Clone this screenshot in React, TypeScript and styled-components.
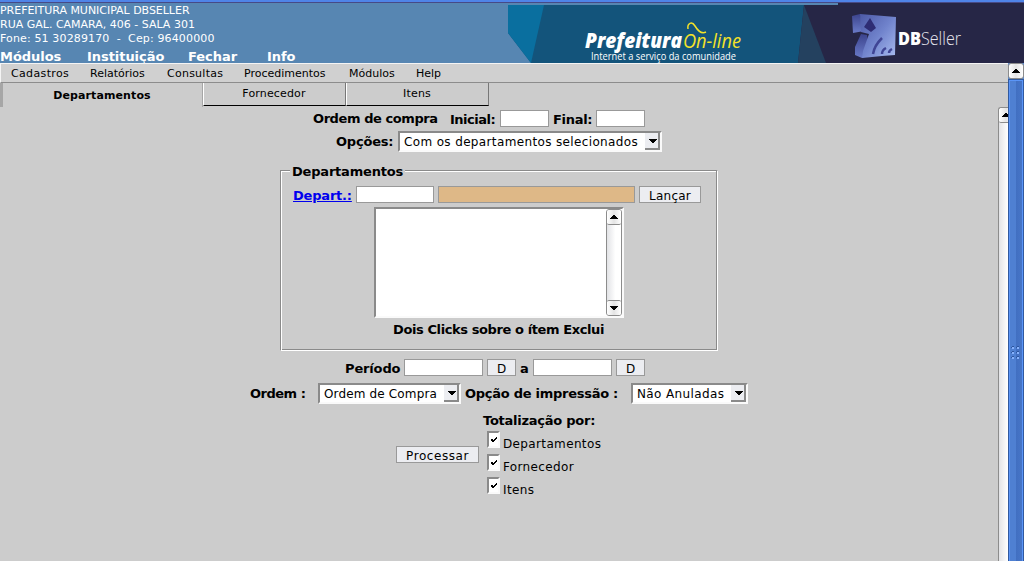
import React from "react";
import styled, { createGlobalStyle, css } from "styled-components";

const Global = createGlobalStyle`
  * { box-sizing: border-box; }
  html, body { margin: 0; padding: 0; overflow: hidden; }
  body { background: #ccc; color: #000; font: 12px "DejaVu Sans", sans-serif; }
`;

const Page = styled.div`
  width: 1024px;
  height: 561px;
  display: flex;
  flex-direction: column;
  overflow: hidden;
  background: #cccccc;
`;

const Header = styled.header`
  height: 63px;
  flex: none;
  display: flex;
  background: #5786b2;
  border-top: 2px solid #4f84e8;
  box-shadow: inset 0 1px 0 #474a86;
`;

const Account = styled.div`
  width: 508px;
  display: flex;
  flex-direction: column;
  padding-top: 2px;
  color: #fff;
`;

const Address = styled.div<{ $ls?: number }>`
  height: 14px;
  line-height: 14px;
  font-size: 11px;
  white-space: pre;
  letter-spacing: ${(p) => p.$ls ?? 0}px;
`;

const HeaderMenu = styled.nav`
  display: flex;
  margin-top: 3px;
  font-size: 13px;
  font-weight: bold;
  line-height: 16px;
  letter-spacing: -0.05px;
`;

const HeaderLink = styled.a<{ $w: number }>`
  width: ${(p) => p.$w}px;
  white-space: nowrap;
`;

const Banner = styled.svg`
  display: block;
  flex: none;
  margin-top: 1px;
`;

const Below = styled.div`
  flex: 1;
  display: flex;
  min-height: 0;
`;

const Main = styled.main`
  width: 1008px;
  display: flex;
  flex-direction: column;
`;

const MenuBar = styled.nav`
  height: 20px;
  flex: none;
  display: flex;
  padding-left: 10px;
  background: #d0d0d0;
  border-top: 1px solid #f4f4f4;
  border-left: 1px solid #f4f4f4;
  border-bottom: 1px solid #8c8c8c;
  font-size: 11px;
  line-height: 19px;
`;

const MenuItem = styled.span<{ $w: number; $ls?: number }>`
  width: ${(p) => p.$w}px;
  white-space: nowrap;
  letter-spacing: ${(p) => p.$ls ?? 0}px;
`;

const Body = styled.div`
  flex: 1;
  display: flex;
  min-height: 0;
`;

const Content = styled.div`
  width: 998px;
  display: flex;
  flex-direction: column;
`;

const Tabs = styled.div`
  display: flex;
  height: 24px;
  flex: none;
  font-size: 11px;
  text-align: center;
`;

const Tab = styled.div<{ $active?: boolean; $w: number }>`
  width: ${(p) => p.$w}px;
  line-height: 21px;
  ${(p) =>
    p.$active
      ? css`
          height: 24px;
          line-height: 25px;
          padding-right: 1px;
          letter-spacing: 0.1px;
          font-weight: bold;
          border-left: 3px solid #a6a6a6;
          border-right: 1px solid #a6a6a6;
        `
      : css`
          height: 23px;
          padding-right: 1px;
          letter-spacing: 0.15px;
          border-left: 1px solid #fff;
          border-right: 1px solid #777;
          border-bottom: 1px solid #000;
        `}
`;

const Row = styled.div<{ $left: number; $top: number; $h: number }>`
  display: flex;
  align-items: center;
  flex: none;
  height: ${(p) => p.$h}px;
  margin-top: ${(p) => p.$top}px;
  padding-left: ${(p) => p.$left}px;
`;

const Label = styled.label<{ $w: number; $ls?: number; $indent?: number; $drop?: number }>`
  width: ${(p) => p.$w}px;
  flex: none;
  padding-left: ${(p) => p.$indent ?? 0}px;
  padding-top: ${(p) => p.$drop ?? 0}px;
  font-size: 13px;
  font-weight: bold;
  line-height: 17px;
  white-space: nowrap;
  letter-spacing: ${(p) => p.$ls ?? 0}px;
`;

const DeptLink = styled(Label)`
  color: #0000ee;
  text-decoration: underline;
`;

const Field = styled.div<{ $w: number; $tan?: boolean }>`
  width: ${(p) => p.$w}px;
  height: 17px;
  flex: none;
  margin-right: 4px;
  border: 1px solid #999;
  background: ${(p) => (p.$tan ? "#deb887" : "#fff")};
`;

const Button = styled.button<{ $w: number; $ls?: number }>`
  width: ${(p) => p.$w}px;
  height: 17px;
  flex: none;
  margin: 0 4px 0 0;
  padding: 2px 0 0;
  border: 1px solid #999;
  background: #ecedf1;
  color: #000;
  font: 12px/15px "DejaVu Sans", sans-serif;
  white-space: nowrap;
  letter-spacing: ${(p) => p.$ls ?? 0}px;
`;

const sunken = css`
  border: 2px solid;
  border-color: #8a8a8a #fafafa #fafafa #8a8a8a;
  background: #fff;
`;

const SelectBox = styled.div<{ $w: number; $ls?: number }>`
  ${sunken}
  width: ${(p) => p.$w}px;
  height: 21px;
  flex: none;
  display: flex;
  justify-content: space-between;
  padding-left: 4px;
  font-size: 12px;
  line-height: 18px;
  white-space: nowrap;
  letter-spacing: ${(p) => p.$ls ?? 0}px;
`;

const DropButton = styled.span`
  width: 15px;
  height: 17px;
  display: flex;
  flex: none;
  background: #ecedf1;
  border: solid #8a8a8a;
  border-width: 0 2px 2px 0;
`;

const Group = styled.section`
  width: 438px;
  height: 186px;
  flex: none;
  margin: 13px 0 0 280px;
  display: flex;
  flex-direction: column;
`;

const GroupTitle = styled.div`
  display: flex;
  align-items: flex-start;
  height: 16px;
  flex: none;
`;

const Legend = styled(Label)`
  margin-top: -2px;
`;

const Groove = styled.div<{ $w: number; $side?: "left" | "right" }>`
  width: ${(p) => p.$w}px;
  height: 11px;
  margin-top: 5px;
  border-top: 1px solid #8a8a8a;
  box-shadow: inset 0 1px 0 #fff;
  ${(p) => p.$side === "left" && css`border-left: 1px solid #8a8a8a; box-shadow: inset 1px 1px 0 #fff;`}
  ${(p) => p.$side === "right" && css`border-right: 1px solid #fff; box-shadow: inset -1px 0 0 #8a8a8a, inset 0 1px 0 #fff;`}
`;

const GroupBody = styled.div`
  flex: 1;
  border: 1px solid;
  border-color: transparent #fff #fff #8a8a8a;
  border-top: 0;
  box-shadow: inset 1px 0 0 #fff, inset -1px -1px 0 #8a8a8a;
`;

const ListBox = styled.div`
  ${sunken}
  width: 250px;
  height: 111px;
  margin: 4px 0 0 93px;
  display: flex;
  justify-content: flex-end;
`;

const ListBar = styled.div`
  width: 16px;
  height: 107px;
  display: flex;
  flex-direction: column;
  justify-content: space-between;
  border: 1px solid #8c8c8c;
  border-radius: 3px;
  background: linear-gradient(90deg, #e2e3e6, #fff 60%);
`;

const Arrow = styled.div<{ $down?: boolean }>`
  height: 15px;
  display: flex;
  align-items: center;
  justify-content: center;
  border-radius: 2px;
  background: linear-gradient(90deg, #fff, #e4e4e4 50%, #fff);
  ${(p) => (p.$down ? "border-top" : "border-bottom")}: 1px solid #8c8c8c;
`;

const InnerBar = styled.div`
  width: 10px;
  margin-top: 24px;
  overflow: hidden;
  border-left: 1px solid #8c8c8c;
  border-top: 1px solid #8c8c8c;
  border-top-left-radius: 3px;
  background: linear-gradient(90deg, #e2e3e6, #fff);
`;

const InnerArrow = styled(Arrow)`
  width: 14px;
`;

const OuterBar = styled.div`
  width: 16px;
  display: flex;
  flex-direction: column;
  background: #5f89c8;
`;

const OuterArrow = styled(Arrow)`
  height: 16px;
  border: 1px solid #8c8c8c;
  border-radius: 3px;
`;

const Thumb = styled.div`
  flex: 1;
  border: 1px solid #30599f;
  border-bottom: 0;
  box-shadow: inset 1px 1px 0 #5a95f8, inset -1px 0 0 #5a95f8;
  background: linear-gradient(90deg, #4f80d2 50%, #416fc1 50%, #4876c8);
  display: flex;
  justify-content: center;
  padding-top: 266px;
`;

const Bottom = styled.div`
  display: flex;
  padding-left: 396px;
  margin-top: 8px;
`;

const Process = styled.div`
  width: 87px;
  padding-top: 34px;
`;

const Checks = styled.div`
  display: flex;
  flex-direction: column;
`;

const ChecksTitle = styled(Label)`
  height: 19px;
`;

const CheckRow = styled.label`
  display: flex;
  height: 23px;
  padding-left: 4px;
  font-size: 12px;
  line-height: 26px;
  letter-spacing: 0.36px;
`;

const CheckBox = styled.span`
  ${sunken}
  width: 13px;
  height: 17px;
  margin-right: 3px;
  display: flex;
`;

const Hint = styled(Label)`
  display: block;
  margin: 3px 0 0 112px;
`;

const Up = () => (
  <svg width="8" height="4" shapeRendering="crispEdges">
    <path d="M3 0h2v1h1v1h1v1h1v1H0V3h1V2h1V1h1z" />
  </svg>
);
const Down = () => (
  <svg width="8" height="4" shapeRendering="crispEdges">
    <path d="M0 0h8v1H7v1H6v1H5v1H3V3H2V2H1V1H0z" />
  </svg>
);
const Select = ({ w, ls, children }: { w: number; ls?: number; children: string }) => (
  <SelectBox $w={w} $ls={ls}>
    {children}
    <DropButton>
      <svg width="13" height="15" shapeRendering="crispEdges">
        <path d="M4 6h8v1h-1v1h-1v1H9v1H7V9H6V8H5V7H4z" />
      </svg>
    </DropButton>
  </SelectBox>
);
const Check = ({ children }: { children: string }) => (
  <CheckRow>
    <CheckBox>
      <svg width="9" height="13" shapeRendering="crispEdges">
        <path d="M7 4h1v2H7v1H6v1H5v1H3V8H2V6h2v1h1V6h1V5h1z" />
      </svg>
    </CheckBox>
    {children}
  </CheckRow>
);

const BannerArt = () => (
  <Banner width="516" height="60" viewBox="508 3 516 60">
    <defs>
      <linearGradient id="cube" x1="0" y1="0" x2="1" y2="1">
        <stop offset="0" stopColor="#4c59a6" />
        <stop offset=".5" stopColor="#7083cc" />
        <stop offset="1" stopColor="#a9bcf0" />
      </linearGradient>
      <linearGradient id="side" x1="0" y1="0" x2="0" y2="1">
        <stop offset="0" stopColor="#3b438c" />
        <stop offset="1" stopColor="#6a7bc8" />
      </linearGradient>
    </defs>
    <path fill="#13547b" d="M508 5h300v58H508z" />
    <path fill="#5786b2" d="M508 33l23 30h-23z" />
    <path fill="#0a6f9f" d="M508 5h36l-13 58-23-30z" />
    <path fill="#262646" d="M804 5h34V3h186v60H798z" />
    <path fill="#24415f" d="M804 5l22 58h-28z" />
    <text x="585" y="48" fill="#fff" fontFamily="Open Sans, sans-serif" fontSize="20.5" fontWeight="800" fontStyle="italic" textLength="97" lengthAdjust="spacingAndGlyphs">Prefeitura</text>
    <text x="683" y="48" fill="#f3e229" fontFamily="Open Sans, sans-serif" fontSize="20.5" fontStyle="italic" textLength="58" lengthAdjust="spacingAndGlyphs">On-line</text>
    <path d="M688 29c-1-6 4-8 7-3s7 8 11 6" fill="none" stroke="#f3e229" strokeWidth="1.5" />
    <text x="591" y="60" fill="#fff" fontFamily="Open Sans, sans-serif" fontSize="10" textLength="145" lengthAdjust="spacingAndGlyphs">Internet a serviço da comunidade</text>
    <path fill="url(#side)" d="M852 16l8-2 4 17-11 2z" />
    <path fill="url(#side)" d="M861 34l-6 13v8l7 3 8-3-3-20z" />
    <path fill="url(#cube)" d="M860 14l36 3-1 38-13 1-20 2 1-7 6-17-8-2z" />
    <path fill="#2e2d74" d="M870 18l6 10-5 4-7-5z" />
    <path fill="none" stroke="#3f4595" strokeWidth="2.5" d="M873 54c1-7 5-12 9-16M882 54c0-3 2-5 4-6M889 53c0-2 1-3 3-4" />
    <text x="898" y="45" fill="#fff" fontFamily="Open Sans, sans-serif" fontSize="18" fontWeight="800" textLength="23" lengthAdjust="spacingAndGlyphs">DB</text>
    <text x="921" y="45" fill="#e6e6ef" fontFamily="Open Sans, sans-serif" fontSize="18" fontWeight="300" textLength="40" lengthAdjust="spacingAndGlyphs">Seller</text>
  </Banner>
);

export default function App() {
  return (
    <Page>
      <Global />
      <Header>
        <Account>
          <Address $ls={-0.03}>PREFEITURA MUNICIPAL DBSELLER</Address>
          <Address>RUA GAL. CAMARA, 406 - SALA 301</Address>
          <Address $ls={0.14}>{"Fone: 51 30289170  -  Cep: 96400000"}</Address>
          <HeaderMenu>
            <HeaderLink $w={87}>Módulos</HeaderLink>
            <HeaderLink $w={101}>Instituição</HeaderLink>
            <HeaderLink $w={79}>Fechar</HeaderLink>
            <HeaderLink $w={60}>Info</HeaderLink>
          </HeaderMenu>
        </Account>
        <BannerArt />
      </Header>
      <Below>
        <Main>
          <MenuBar>
            <MenuItem $w={79} $ls={0.35}>Cadastros</MenuItem>
            <MenuItem $w={77}>Relatórios</MenuItem>
            <MenuItem $w={77} $ls={0.25}>Consultas</MenuItem>
            <MenuItem $w={105}>Procedimentos</MenuItem>
            <MenuItem $w={67}>Módulos</MenuItem>
            <MenuItem $w={60}>Help</MenuItem>
          </MenuBar>
          <Body>
            <Content>
              <Tabs>
                <Tab $active $w={203}>Departamentos</Tab>
                <Tab $w={143}>Fornecedor</Tab>
                <Tab $w={143}>Itens</Tab>
              </Tabs>
              <Row $left={313} $top={3} $h={17}>
                <Label $w={137} $ls={-0.42}>Ordem de compra</Label>
                <Label $w={50} $ls={-0.5} $drop={1}>Inicial:</Label>
                <Field $w={49} />
                <Label $w={43} $ls={-0.3} $drop={1}>Final:</Label>
                <Field $w={49} />
              </Row>
              <Row $left={336} $top={4} $h={21}>
                <Label $w={62} $ls={-0.2}>Opções:</Label>
                <Select w={264} ls={0.36}>Com os departamentos selecionados</Select>
              </Row>
              <Group>
                <GroupTitle>
                  <Groove $w={10} $side="left" />
                  <Legend $w={115} $indent={2} $ls={-0.2}>Departamentos</Legend>
                  <Groove $w={313} $side="right" />
                </GroupTitle>
                <GroupBody>
                  <Row $left={12} $top={5} $h={17}>
                    <DeptLink $w={63} $ls={-0.2} $drop={2}>Depart.:</DeptLink>
                    <Field $w={78} />
                    <Field $w={197} $tan />
                    <Button $w={62} $ls={0.25}>Lançar</Button>
                  </Row>
                  <ListBox>
                    <ListBar>
                      <Arrow><Up /></Arrow>
                      <Arrow $down><Down /></Arrow>
                    </ListBar>
                  </ListBox>
                  <Hint $w={230} $ls={-0.4}>Dois Clicks sobre o ítem Exclui</Hint>
                </GroupBody>
              </Group>
              <Row $left={345} $top={8} $h={17}>
                <Label $w={59} $ls={-0.15} $drop={1}>Período</Label>
                <Field $w={79} />
                <Button $w={29}>D</Button>
                <Label $w={13} $drop={1}>a</Label>
                <Field $w={79} />
                <Button $w={29}>D</Button>
              </Row>
              <Row $left={250} $top={7} $h={21}>
                <Label $w={68} $ls={-0.5}>Ordem :</Label>
                <Select w={143} ls={0.15}>Ordem de Compra</Select>
                <Label $w={170} $indent={4} $ls={-0.27}>Opção de impressão :</Label>
                <Select w={117} ls={0.38}>Não Anuladas</Select>
              </Row>
              <Bottom>
                <Process>
                  <Button $w={83} $ls={0.55}>Processar</Button>
                </Process>
                <Checks>
                  <ChecksTitle $w={130} $ls={-0.25}>Totalização por:</ChecksTitle>
                  <Check>Departamentos</Check>
                  <Check>Fornecedor</Check>
                  <Check>Itens</Check>
                </Checks>
              </Bottom>
            </Content>
            <InnerBar>
              <InnerArrow><Up /></InnerArrow>
            </InnerBar>
          </Body>
        </Main>
        <OuterBar>
          <OuterArrow><Up /></OuterArrow>
          <Thumb>
            <svg width="10" height="14" shapeRendering="crispEdges">
              {[0, 5, 10].map((y) =>
                [0, 5].map((x) => (
                  <g key={`${x}-${y}`}>
                    <path fill="#2e569e" d={`M${x + 1} ${y}h2v1h-1v1h-2v-1h1z`} />
                    <path fill="#86b1fb" d={`M${x + 1} ${y + 1}h2v2h-2z`} />
                  </g>
                ))
              )}
            </svg>
          </Thumb>
        </OuterBar>
      </Below>
    </Page>
  );
}
